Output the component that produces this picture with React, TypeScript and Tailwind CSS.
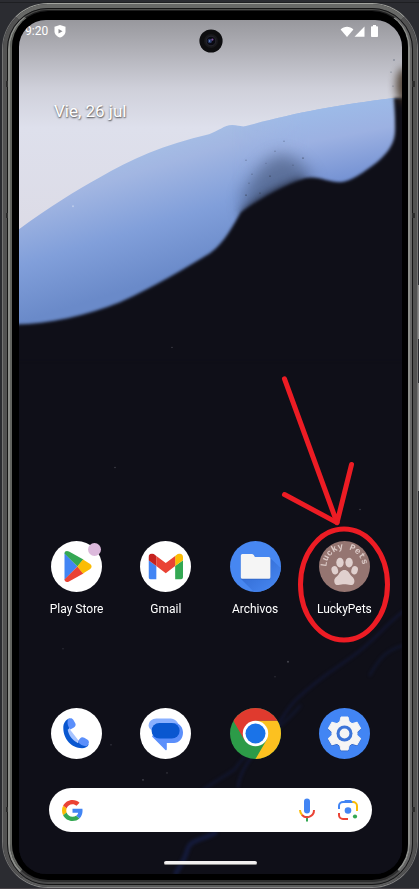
import React from "react";

function Wallpaper() {
  return (
    <svg
      className="absolute inset-0 h-full w-full"
      viewBox="19 20 383 853"
      preserveAspectRatio="none"
      aria-hidden="true"
    >
      <defs>
        <linearGradient id="sky" x1="0" y1="0" x2="0" y2="1">
          <stop offset="0" stopColor="#98989d" />
          <stop offset="0.15" stopColor="#b2b2b9" />
          <stop offset="0.32" stopColor="#cfd0da" />
          <stop offset="0.5" stopColor="#dee0ec" />
          <stop offset="1" stopColor="#dcdbe6" />
        </linearGradient>
        <linearGradient id="ice" gradientUnits="userSpaceOnUse" x1="150" y1="140" x2="190" y2="270">
          <stop offset="0" stopColor="#a6c0e6" />
          <stop offset="0.2" stopColor="#a2b6e2" />
          <stop offset="0.6" stopColor="#819fda" />
          <stop offset="1" stopColor="#6a8ac9" />
        </linearGradient>
        <linearGradient id="iceRight" gradientUnits="userSpaceOnUse" x1="320" y1="108" x2="335" y2="185">
          <stop offset="0" stopColor="#9dbbe8" />
          <stop offset="0.4" stopColor="#9cb1e2" />
          <stop offset="1" stopColor="#7290d2" />
        </linearGradient>
        <linearGradient id="fadeIn" x1="0" y1="0" x2="1" y2="0">
          <stop offset="0" stopColor="#fff" stopOpacity="0" />
          <stop offset="1" stopColor="#fff" />
        </linearGradient>
        <mask id="rightMask" maskUnits="userSpaceOnUse" x="220" y="80" width="190" height="130">
          <rect x="230" y="80" width="80" height="130" fill="url(#fadeIn)" />
          <rect x="309" y="80" width="100" height="130" fill="#fff" />
        </mask>
        <filter id="soft1" x="-10%" y="-10%" width="120%" height="120%" colorInterpolationFilters="sRGB">
          <feGaussianBlur stdDeviation="1.6" />
        </filter>
        <filter id="soft2" x="-50%" y="-80%" width="200%" height="260%" colorInterpolationFilters="sRGB">
          <feGaussianBlur stdDeviation="8" />
        </filter>
        <filter id="soft3" x="-100%" y="-100%" width="300%" height="300%" colorInterpolationFilters="sRGB">
          <feGaussianBlur stdDeviation="4" />
        </filter>
      </defs>
      <rect x="19" y="20" width="383" height="853" fill="#0f0f18" />
      <rect x="19" y="20" width="383" height="215" fill="url(#sky)" />
      <path
        d="M19 229C50 206 75 191 100 177C130 159 165 144 209 134C219 131 224 125 232 125C238 125 241 127 246 126C290 114 335 105 394 98L402 98V335H19Z"
        fill="url(#ice)"
      />
      <path
        d="M232 125C238 125 241 127 246 126C290 114 335 105 394 98L402 98V210H232Z"
        fill="url(#iceRight)"
        mask="url(#rightMask)"
      />
      <path
        d="M242 196C252 176 262 160 280 154C296 156 304 164 314 182L296 196L244 216Z"
        fill="#33415c"
        opacity="0.5"
        filter="url(#soft2)"
      />
      <path
        d="M240 212C256 200 276 186 304 178L300 200L244 216Z"
        fill="#0f0f18"
        opacity="0.8"
        filter="url(#soft3)"
      />
      <path
        d="M10 324C45 325 85 316 120 302C155 286 185 268 210 253C226 241 232 226 241 212C255 202 280 187 305 178C318 175 328 182 340 182C350 182 364 172 377 162C398 144 395 133 395 118L394 98L425 97V360H10Z"
        fill="#0f0f18"
        filter="url(#soft1)"
      />
      <ellipse cx="404" cy="86" rx="8" ry="18" fill="#3d2d1c" opacity="0.85" filter="url(#soft3)" />
      <g fill="#3d4a61" opacity="0.6">
        <circle cx="246" cy="160" r="0.6" />
        <circle cx="252" cy="174" r="0.6" />
        <circle cx="270" cy="176" r="0.9" />
        <circle cx="260" cy="193" r="0.9" />
        <circle cx="246" cy="195" r="0.9" />
        <circle cx="303" cy="158" r="0.8" />
        <circle cx="284" cy="141" r="0.6" />
        <circle cx="293" cy="165" r="0.6" />
        <circle cx="275" cy="151" r="0.6" />
        <circle cx="249" cy="183" r="0.6" />
        <circle cx="266" cy="163" r="0.5" />
        <circle cx="394" cy="60" r="0.8" />
        <circle cx="391" cy="72" r="0.6" />
        <circle cx="393" cy="86" r="0.6" />
      </g>
      <circle cx="73" cy="206" r="1" fill="#bccbea" />
      <g fill="none" stroke="#18245a" strokeLinecap="round" filter="url(#soft1)">
        <path d="M404 610C385 624 375 640 352 656C335 668 318 678 298 697C285 708 282 722 262 744C250 757 240 770 238 786" strokeWidth="2.5" opacity="0.4" />
        <path d="M402 645C385 650 378 660 370 674" strokeWidth="2.5" opacity="0.35" />
        <path d="M300 705C280 730 250 745 235 768C222 778 210 782 200 792" strokeWidth="3" opacity="0.3" />
        <path d="M215 832C200 840 190 838 187 850C184 860 180 865 176 872" strokeWidth="5" opacity="0.5" />
      </g>
      <g fill="#4b4b55">
        <circle cx="115" cy="467" r="0.7" />
        <circle cx="360" cy="509" r="0.7" />
        <circle cx="172" cy="347" r="0.6" />
        <circle cx="288" cy="661" r="0.9" />
        <circle cx="63" cy="648" r="0.6" />
        <circle cx="143" cy="779" r="0.8" />
        <circle cx="167" cy="772" r="0.7" />
        <circle cx="275" cy="676" r="0.6" />
        <circle cx="111" cy="744" r="0.7" />
        <circle cx="330" cy="601" r="0.7" />
      </g>
    </svg>
  );
}

function PlayIcon() {
  return (
    <svg viewBox="0 0 51 51" className="h-full w-full" aria-hidden="true">
      <circle cx="25.5" cy="25.5" r="25.5" fill="#fff" />
      <path d="M13.5 12L26.5 25.5L13.5 39Z" fill="#4285f4" />
      <path d="M13.5 12.5C13.5 10 16 9.5 18 10.6L32.4 18.6L26.5 25.5Z" fill="#34a853" />
      <path d="M13.5 38.5C13.5 41 16 41.5 18 40.4L32.4 32.4L26.5 25.5Z" fill="#ea4335" />
      <path d="M32 18.4L39.2 23Q42 25.5 39.2 28L32 32.6L26.3 25.5Z" fill="#fbbc04" />
    </svg>
  );
}

function GmailIcon() {
  return (
    <svg viewBox="0 0 51 51" className="h-full w-full" aria-hidden="true">
      <circle cx="25.5" cy="25.5" r="25.5" fill="#fff" />
      <svg x="8.5" y="12.5" width="34.5" height="26" viewBox="52 42 88 66">
        <path d="M58 108h14V74L52 59v43c0 3.32 2.69 6 6 6" fill="#4285f4" />
        <path d="M120 108h14c3.32 0 6-2.69 6-6V59l-20 15" fill="#34a853" />
        <path d="M120 48v26l20-15v-8c0-7.42-8.47-11.65-14.4-7.2" fill="#fbbc04" />
        <path d="M72 74V48l24 18 24-18v26L96 92" fill="#ea4335" />
        <path d="M52 51v8l20 15V48l-5.6-4.2c-5.94-4.45-14.4-.22-14.4 7.2" fill="#c5221f" />
      </svg>
    </svg>
  );
}

function FilesIcon() {
  return (
    <svg viewBox="0 0 51 51" className="h-full w-full" aria-hidden="true">
      <defs>
        <clipPath id="filesClip">
          <circle cx="25.5" cy="25.5" r="25.5" />
        </clipPath>
        <linearGradient id="filesShade" x1="0.3" y1="0.3" x2="0.8" y2="0.8">
          <stop offset="0" stopColor="#3670d8" />
          <stop offset="1" stopColor="#4787f1" />
        </linearGradient>
      </defs>
      <circle cx="25.5" cy="25.5" r="25.5" fill="#4787f1" />
      <path d="M40.3 17L56 32V56H29L11 38Z" fill="url(#filesShade)" clipPath="url(#filesClip)" />
      <path d="M10.8 14.5Q10.8 13 12.3 13H22Q23 13 23.6 13.8L25 16H38.9Q40.4 16 40.4 17.5V37Q40.4 38.5 38.9 38.5H12.3Q10.8 38.5 10.8 37Z" fill="#2f62c2" />
      <path d="M10.8 14.5Q10.8 13 12.3 13H22Q23 13 23.6 13.8L25 16H38.9Q40.4 16 40.4 17.5V36.2Q40.4 37.7 38.9 37.7H12.3Q10.8 37.7 10.8 36.2Z" fill="#f5f5f5" />
    </svg>
  );
}

function LuckyPetsIcon() {
  return (
    <svg viewBox="0 0 51 51" className="h-full w-full" aria-hidden="true">
      <defs>
        <path id="petsArc" d="M7.5 26A18 18 0 0 1 43.5 26" />
      </defs>
      <circle cx="25.5" cy="25.5" r="25.5" fill="#957571" />
      <text className="font-['Liberation_Mono',monospace] text-[9px] font-bold" fill="#dccbc8">
        <textPath href="#petsArc">Lucky Pets</textPath>
      </text>
      <g fill="#e0d0ce">
        <ellipse cx="15.8" cy="29.2" rx="3.2" ry="4.2" transform="rotate(-18 15.8 29.2)" />
        <ellipse cx="21" cy="21.6" rx="3.7" ry="4.9" />
        <ellipse cx="30.1" cy="21.6" rx="3.7" ry="4.9" />
        <ellipse cx="35.6" cy="29.2" rx="3.2" ry="4.2" transform="rotate(18 35.6 29.2)" />
        <path d="M25.4 29C28.6 29 30 31.6 31.2 33.6C32.6 35.8 35.6 36.8 35.4 40.4C35.3 43 33.6 44.2 31.4 44C29.2 43.8 27.4 43.2 25.4 43.2C23.4 43.2 21.6 43.8 19.4 44C17 44.2 15.4 43 15.3 40.4C15.1 36.8 18.2 35.8 19.6 33.6C20.8 31.6 22.2 29 25.4 29Z" />
      </g>
    </svg>
  );
}

function PhoneIcon() {
  return (
    <svg viewBox="0 0 51 51" className="h-full w-full" aria-hidden="true">
      <circle cx="25.5" cy="25.5" r="25.5" fill="#fff" />
      <path d="M17 19L27.5 32.5L25.5 34.5C20 32 16.5 27 16 21Z" fill="#a6c3ff" />
      <path d="M18.5 10.3C14.5 12.2 12.3 15 12.3 20C12.3 31 20.5 40.2 31 40.2C34 40.2 36.5 39 37.7 36.5L30 32.5L26.6 34.8C21.5 32.2 17.6 27.2 16.7 21.7L20 19Z" fill="#0957d0" />
      <path d="M17.3 11C19 9.8 21.3 9.8 22.3 11.8L24.4 15.6C25.2 17.4 24 19 22.5 19.7L19.2 21.5C17 18.5 15.6 14.5 17.3 11Z" fill="#5b8ffb" />
      <path d="M26.6 33.6L29 30.5C30.2 29 31.8 28.9 33.3 29.8L36.6 31.8C38.4 33 38.3 35.3 36.9 37L36 38.2C32.5 38.5 29 37 26.6 33.6Z" fill="#5b8ffb" />
    </svg>
  );
}

function MessagesIcon() {
  return (
    <svg viewBox="0 0 51 51" className="h-full w-full" aria-hidden="true">
      <circle cx="25.5" cy="25.5" r="25.5" fill="#fff" />
      <path d="M16.5 10.4H30.5C35 10.4 38.8 14 38.8 19V23H13C10 21.5 8.6 19.5 8.6 17.5C8.6 13.5 12 10.4 16.5 10.4Z" fill="#8ab0ff" />
      <path d="M20 15H35C39.6 15 43 19.6 43 24.5C43 30.5 39 35 34 35H26.8V41.3Q26.6 42.8 25.4 42L12 28.5Z" fill="#5b8ffb" />
      <rect x="11.6" y="15" width="28" height="15.4" rx="7.7" fill="#0957d0" />
    </svg>
  );
}

function ChromeIcon() {
  return (
    <svg viewBox="0 0 51 51" className="h-full w-full" aria-hidden="true">
      <defs>
        <clipPath id="chromeClip">
          <circle cx="25.5" cy="25.5" r="25.5" />
        </clipPath>
      </defs>
      <g clipPath="url(#chromeClip)">
        <rect width="51" height="51" fill="#2c9b48" />
        <path d="M25.5 12.7H51V51H25.5L36.6 31.9Z" fill="#fcc120" />
        <path d="M3.3 12.7L14.4 31.9L25.5 12.7H48V0H0V7Z" fill="#e03a2e" />
      </g>
      <circle cx="25.5" cy="25.5" r="12.7" fill="#fff" />
      <circle cx="25.5" cy="25.5" r="10" fill="#1a73e8" />
    </svg>
  );
}

function SettingsIcon() {
  return (
    <svg viewBox="0 0 51 51" className="h-full w-full" aria-hidden="true">
      <circle cx="25.5" cy="25.5" r="25.5" fill="#4285f4" />
      {["#3367c6", "#f5f5f5"].map((color, layer) => (
        <g key={color} fill={color} stroke={color} strokeWidth="1" strokeLinejoin="round" transform={layer === 0 ? "translate(0 0.8)" : undefined}>
          <circle cx="25.5" cy="25.5" r="12.6" />
          {[0, 60, 120, 180, 240, 300].map((angle) => (
            <path key={angle} d="M20.6 14.5L22 9H29L30.4 14.5Z" transform={`rotate(${angle} 25.5 25.5)`} />
          ))}
        </g>
      ))}
      <circle cx="25.5" cy="25.5" r="8" fill="#3b74d8" />
      <circle cx="25.5" cy="25.5" r="4.9" fill="#f5f5f5" />
    </svg>
  );
}

function GoogleLogo() {
  return (
    <svg viewBox="0 0 48 48" className="size-[21px] shrink-0" aria-hidden="true">
      <path fill="#ea4335" d="M24 9.5c3.54 0 6.71 1.22 9.21 3.6l6.85-6.85C35.9 2.38 30.47 0 24 0 14.62 0 6.51 5.38 2.56 13.22l7.98 6.19C12.43 13.72 17.74 9.5 24 9.5z" />
      <path fill="#4285f4" d="M46.98 24.55c0-1.57-.15-3.09-.38-4.55H24v9.02h12.94c-.58 2.96-2.26 5.48-4.78 7.18l7.73 6c4.51-4.18 7.09-10.36 7.09-17.65z" />
      <path fill="#fbbc05" d="M10.53 28.59c-.48-1.45-.76-2.99-.76-4.59s.27-3.14.76-4.59l-7.98-6.19C.92 16.46 0 20.12 0 24c0 3.88.92 7.54 2.56 10.78l7.97-6.19z" />
      <path fill="#34a853" d="M24 48c6.48 0 11.93-2.13 15.89-5.81l-7.73-6c-2.15 1.45-4.92 2.3-8.16 2.3-6.26 0-11.57-4.22-13.47-9.91l-7.98 6.19C6.51 42.62 14.62 48 24 48z" />
    </svg>
  );
}

function MicIcon() {
  return (
    <svg viewBox="0 0 24 24" className="size-6" aria-hidden="true">
      <rect x="9" y="0.5" width="6" height="15" rx="3" fill="#4285f4" />
      <rect x="11" y="18" width="2" height="5.5" fill="#34a853" />
      <g fill="none" strokeWidth="2">
        <path d="M5 12A7 7 0 0 0 7.3 17.2" stroke="#fbbc04" />
        <path d="M7 17A7 7 0 0 0 19 12" stroke="#ea4335" />
      </g>
    </svg>
  );
}

function LensIcon() {
  return (
    <svg viewBox="0 0 24 24" className="size-6" aria-hidden="true">
      <g fill="none" strokeWidth="2">
        <path d="M3 11V8A4 4 0 0 1 7 4H16" stroke="#4285f4" />
        <path d="M16 4H17A4 4 0 0 1 21 8V13" stroke="#fbbc04" />
        <path d="M3 15V17A4 4 0 0 0 7 21H12" stroke="#ea4335" />
      </g>
      <path d="M7 4.5L9 2H15L17 4.5Z" fill="#4285f4" />
      <circle cx="12" cy="12.5" r="3.3" fill="#4285f4" />
      <circle cx="19" cy="18.5" r="2.1" fill="#34a853" />
    </svg>
  );
}

function StatusBar() {
  return (
    <header className="relative flex h-[22px] items-center justify-between pr-6 pl-1.5 text-white">
      <div className="flex items-center gap-1.5">
        <time className="text-[12px] leading-4">9:20</time>
        <svg viewBox="0 0 12 13" className="h-[13px] w-3" aria-label="Play Protect">
          <path d="M6 0L11.5 1.8V6.5C11.5 9.6 8.8 11.6 6 12.6C3.2 11.6 0.5 9.6 0.5 6.5V1.8Z" fill="#fff" />
          <path d="M4.5 4L8.5 6.2L4.5 8.4Z" fill="#8d8d92" />
        </svg>
      </div>
      <div className="flex items-center">
        <svg viewBox="0 0 14 11" className="h-[11px] w-3.5" aria-label="Wi-Fi">
          <path d="M0.6 3.4C4.2 0 9.8 0 13.4 3.4L7 11Z" fill="#fff" />
        </svg>
        <svg viewBox="0 0 11 11" className="h-[11px] w-[11px]" aria-label="Señal">
          <path d="M10.5 0.5V10.8H0.5Z" fill="#fff" />
        </svg>
        <svg viewBox="0 0 7 12" className="ml-1.5 h-3 w-[7px]" aria-label="Batería">
          <path d="M2 0H5V1.2H6.2Q7 1.2 7 2V11.2Q7 12 6.2 12H0.8Q0 12 0 11.2V2Q0 1.2 0.8 1.2H2Z" fill="#fff" />
        </svg>
      </div>
    </header>
  );
}

function Camera() {
  return (
    <svg viewBox="0 0 24 24" className="absolute top-[9px] left-1/2 size-6 -translate-x-1/2" aria-hidden="true">
      <circle cx="12" cy="12" r="11.6" fill="#0d0d0f" />
      <circle cx="12" cy="12" r="7" fill="#18181b" />
      <circle cx="12" cy="12" r="4.8" fill="#0a0a12" stroke="#2b2b33" strokeWidth="0.8" />
      <circle cx="10.8" cy="12" r="2.2" fill="#273764" />
      <circle cx="13.4" cy="10.6" r="1.1" fill="#8052a0" />
      <circle cx="10.6" cy="12" r="0.7" fill="#7ea0d8" />
    </svg>
  );
}

function Annotation() {
  return (
    <svg
      className="pointer-events-none absolute inset-0 h-full w-full"
      viewBox="19 20 383 853"
      preserveAspectRatio="none"
      aria-hidden="true"
    >
      <g fill="none" stroke="#ed1c24" strokeWidth="5" strokeLinecap="round" strokeLinejoin="round">
        <path d="M284.5 378.5L337 522L351.5 464" />
        <path d="M284.5 494L337 522" />
        <ellipse cx="344" cy="583.8" rx="43.5" ry="55.5" />
      </g>
    </svg>
  );
}

const apps = [
  { name: "Play Store", Icon: PlayIcon, badge: true },
  { name: "Gmail", Icon: GmailIcon, badge: false },
  { name: "Archivos", Icon: FilesIcon, badge: false },
  { name: "LuckyPets", Icon: LuckyPetsIcon, badge: false },
];

const dock = [
  { name: "Teléfono", Icon: PhoneIcon },
  { name: "Mensajes", Icon: MessagesIcon },
  { name: "Chrome", Icon: ChromeIcon },
  { name: "Ajustes", Icon: SettingsIcon },
];

function Notches({ side }: { side: "left" | "right" }) {
  return (
    <div className={side === "left" ? "absolute inset-y-0 left-[3px] w-0.5" : "absolute inset-y-0 right-[2px] w-[3px]"}>
      <i className="absolute top-[77px] h-[6px] w-full bg-[#2c2c2c]" />
      <i className="absolute top-[209px] h-[5px] w-full bg-[#2c2c2c]" />
      <i className="absolute bottom-[75px] h-[5px] w-full bg-[#2c2c2c]" />
    </div>
  );
}

export default function App() {
  return (
    <div className="relative flex min-h-screen flex-col border-b border-[#4a4549] bg-[#2b2c31] pt-[3px] pr-px pl-0.5 font-[Roboto,sans-serif]">
      <div className="absolute inset-x-0 top-0 h-[3px] border-b border-[#1e1f22]" />
      <div className="absolute top-[285px] right-0 h-[54px] w-px bg-[#8a8a8a]" />
      <div className="absolute top-[383px] right-0 h-[108px] w-px bg-[#8a8a8a]" />
      <div className="relative flex flex-1 flex-col rounded-[46px] border border-t-[#a3a49f] border-r-[#747474] border-b-[#858585] border-l-[#747474]">
        <div className="flex flex-1 flex-col rounded-[45px] border-x-4 border-t-4 border-b-2 border-t-[#686967] border-r-[#525252] border-b-[#5a5a5a] border-l-[#525252]">
          <div className="flex flex-1 flex-col rounded-[41px] border border-[#151515]">
            <div className="flex flex-1 flex-col rounded-[40px] border-x-2 border-t border-b-2 border-t-[#4c4c4a] border-r-[#666] border-b-[#4b4b4b] border-l-[#8c8e8a]">
              <div className="flex flex-1 flex-col rounded-[38px] border-x-2 border-t border-b-2 border-t-[#1e1e1e] border-r-[#8c8e8a] border-b-[#2e2e2e] border-l-[#62645f]">
                <div className="flex flex-1 flex-col rounded-[36px] bg-black pt-[9px] pr-[6px] pb-[6px] pl-[7px]">
                  <main className="relative flex flex-1 flex-col overflow-hidden rounded-[27px] bg-[#0f0f18]">
                    <Wallpaper />
                    <StatusBar />
                    <Camera />
                    <p className="relative mt-[57px] pl-[35px] text-[17px] leading-6 text-white [text-shadow:0_1px_2px_rgba(0,0,0,0.55),1px_1px_1px_rgba(0,0,0,0.25)]">
                      Vie, 26 jul
                    </p>
                    <div className="min-h-8 flex-1" />
                    <nav aria-label="Aplicaciones" className="relative grid grid-cols-4 px-[13px]">
                      {apps.map(({ name, Icon, badge }) => (
                        <button key={name} type="button" className="flex flex-col items-center gap-[9px]">
                          <span className="relative size-[51px]">
                            <Icon />
                            {badge && <span className="absolute top-[2px] right-[1px] size-[13px] rounded-full bg-[#dcb9dc]" />}
                          </span>
                          <span className="text-[12px] leading-4 text-white">{name}</span>
                        </button>
                      ))}
                    </nav>
                    <nav aria-label="Favoritos" className="relative mt-[91px] grid grid-cols-4 px-[13px]">
                      {dock.map(({ name, Icon }) => (
                        <button key={name} type="button" aria-label={name} className="mx-auto size-[51px]">
                          <Icon />
                        </button>
                      ))}
                    </nav>
                    <form
                      role="search"
                      onSubmit={(event) => event.preventDefault()}
                      className="relative mx-[30px] mt-[29px] flex h-11 items-center rounded-full bg-white pr-3 pl-[13px]"
                    >
                      <GoogleLogo />
                      <input
                        type="text"
                        aria-label="Buscar"
                        className="h-full min-w-0 flex-1 bg-transparent px-3 text-[14px] text-gray-800 outline-none"
                      />
                      <button type="button" aria-label="Búsqueda por voz" className="mr-[17px]">
                        <MicIcon />
                      </button>
                      <button type="button" aria-label="Google Lens">
                        <LensIcon />
                      </button>
                    </form>
                    <div className="relative mx-auto mt-[29px] mb-[9px] h-1 w-[93px] rounded-full border-b border-[#8a8a8a] bg-[#f2f0f0]" />
                    <Annotation />
                  </main>
                </div>
              </div>
            </div>
          </div>
        </div>
        <Notches side="left" />
        <Notches side="right" />
      </div>
    </div>
  );
}
